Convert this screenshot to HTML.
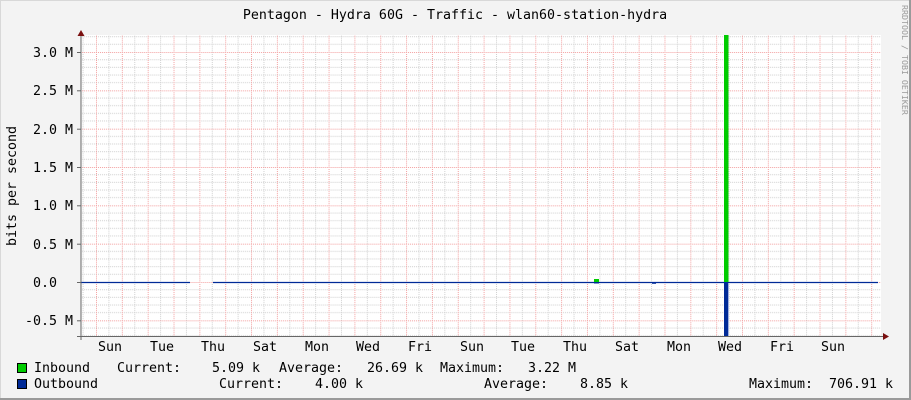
<!DOCTYPE html>
<html><head><meta charset="utf-8"><style>
html,body{margin:0;padding:0;background:#f3f3f3}
svg{display:block}
text{font-family:"DejaVu Sans Mono","Liberation Mono",monospace;font-size:13.3px;fill:#000}
</style></head><body>
<svg width="911" height="400" viewBox="0 0 911 400" xmlns="http://www.w3.org/2000/svg">
<defs>
<pattern id="g" patternUnits="userSpaceOnUse" x="96" y="282" width="25.84" height="38.33">
  <line x1="12.92" y1="0" x2="12.92" y2="38.33" stroke="#cfcfcf" stroke-dasharray="1,1"/>
  <line x1="0" y1="7.67" x2="25.84" y2="7.67" stroke="#cfcfcf" stroke-dasharray="1,1"/>
  <line x1="0" y1="15.33" x2="25.84" y2="15.33" stroke="#cfcfcf" stroke-dasharray="1,1"/>
  <line x1="0" y1="23" x2="25.84" y2="23" stroke="#cfcfcf" stroke-dasharray="1,1"/>
  <line x1="0" y1="30.67" x2="25.84" y2="30.67" stroke="#cfcfcf" stroke-dasharray="1,1"/>
  <line x1="0.5" y1="0" x2="0.5" y2="38.33" stroke="#f3a0a0" stroke-dasharray="1,1"/>
  <line x1="0" y1="0.5" x2="25.84" y2="0.5" stroke="#f3a0a0" stroke-dasharray="1,1"/>
</pattern>
</defs>
<rect x="0" y="0" width="911" height="400" fill="#f3f3f3"/>
<rect x="0.5" y="0.5" width="909" height="398" fill="none" stroke="#d8d8d8"/>
<line x1="910" y1="0" x2="910" y2="400" stroke="#9a9a9a" stroke-width="2"/>
<line x1="0" y1="399" x2="911" y2="399" stroke="#9a9a9a" stroke-width="2"/>

<rect x="81" y="35" width="800" height="301" fill="#fff"/>
<rect x="82" y="35" width="799" height="301" fill="url(#g)"/>

<line x1="81" y1="282.5" x2="190" y2="282.5" stroke="#002a97" stroke-width="1.3"/>
<line x1="213" y1="282.5" x2="878" y2="282.5" stroke="#002a97" stroke-width="1.3"/>
<rect x="594" y="279" width="5" height="3" fill="#00cc00"/>
<rect x="594" y="282" width="5" height="1.5" fill="#002a97"/>
<rect x="652" y="282" width="4" height="1.8" fill="#002a97"/>
<rect x="724" y="35" width="4.5" height="247" fill="#00cc00"/>
<rect x="724" y="283" width="4" height="53" fill="#002a97"/>
<rect x="728" y="283" width="1" height="53" fill="#9fb0e0"/>

<line x1="81" y1="33" x2="81" y2="340" stroke="#666" stroke-width="1"/>
<polygon points="77.5,36 84.5,36 81,30" fill="#7a1010"/>
<line x1="77" y1="336.5" x2="884" y2="336.5" stroke="#666"/>
<polygon points="883,333 883,340 889,336.5" fill="#7a1010"/>
<g stroke="#666">
<line x1="77" y1="52.5" x2="81" y2="52.5"/><line x1="77" y1="90.8" x2="81" y2="90.8"/><line x1="77" y1="129.2" x2="81" y2="129.2"/><line x1="77" y1="167.5" x2="81" y2="167.5"/><line x1="77" y1="205.8" x2="81" y2="205.8"/><line x1="77" y1="244.2" x2="81" y2="244.2"/><line x1="77" y1="282.5" x2="81" y2="282.5"/><line x1="77" y1="320.8" x2="81" y2="320.8"/>
</g>

<text x="455" y="19" text-anchor="middle">Pentagon - Hydra 60G - Traffic - wlan60-station-hydra</text>
<text transform="translate(902,5) rotate(90)" style="font-size:8.3px;fill:#999">RRDTOOL / TOBI OETIKER</text>
<text transform="translate(16,186) rotate(-90)" text-anchor="middle">bits per second</text>

<g text-anchor="end">
<text x="73" y="57">3.0 M</text>
<text x="73" y="95">2.5 M</text>
<text x="73" y="134">2.0 M</text>
<text x="73" y="172">1.5 M</text>
<text x="73" y="210">1.0 M</text>
<text x="73" y="249">0.5 M</text>
<text x="57" y="287">0.0</text>
<text x="73" y="325">-0.5 M</text>
</g>

<g text-anchor="middle">
<text x="110" y="351">Sun</text><text x="162" y="351">Tue</text><text x="213" y="351">Thu</text><text x="265" y="351">Sat</text><text x="317" y="351">Mon</text><text x="368" y="351">Wed</text><text x="420" y="351">Fri</text><text x="472" y="351">Sun</text><text x="523" y="351">Tue</text><text x="575" y="351">Thu</text><text x="627" y="351">Sat</text><text x="679" y="351">Mon</text><text x="730" y="351">Wed</text><text x="782" y="351">Fri</text><text x="833" y="351">Sun</text>
</g>

<rect x="17.5" y="363.5" width="9" height="9" fill="#00cc00" stroke="#000"/>
<rect x="17.5" y="379.5" width="9" height="9" fill="#002a97" stroke="#000"/>
<text x="34" y="372">Inbound</text>
<text x="117" y="372">Current:</text>
<text x="212" y="372">5.09 k</text>
<text x="279" y="372">Average:</text>
<text x="367" y="372">26.69 k</text>
<text x="440" y="372">Maximum:</text>
<text x="528" y="372">3.22 M</text>
<text x="34" y="388">Outbound</text>
<text x="219" y="388">Current:</text>
<text x="315" y="388">4.00 k</text>
<text x="484" y="388">Average:</text>
<text x="580" y="388">8.85 k</text>
<text x="749" y="388">Maximum:</text>
<text x="829" y="388">706.91 k</text>
</svg>
</body></html>
